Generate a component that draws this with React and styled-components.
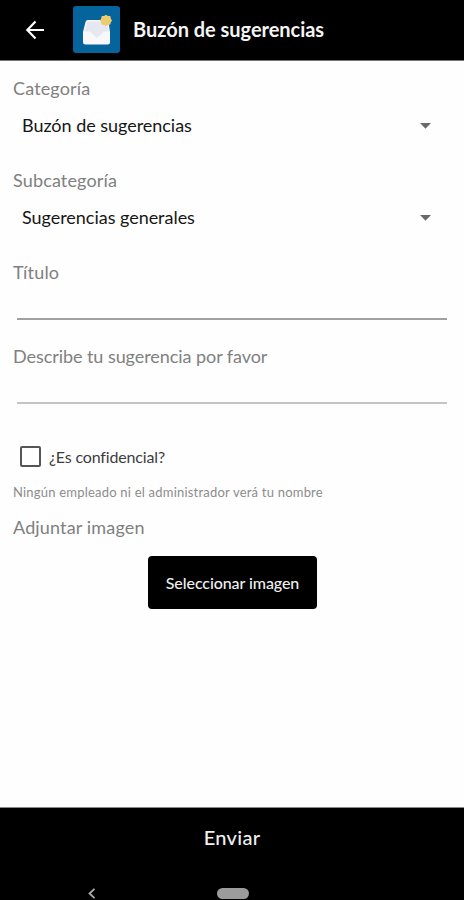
import React, { useState } from "react";
import styled, { createGlobalStyle } from "styled-components";

const GlobalStyle = createGlobalStyle`
  * {
    box-sizing: border-box;
  }

  body {
    margin: 0;
    background: #fefefe;
    font-family: Lato, "Liberation Sans", sans-serif;
  }
`;

const Screen = styled.div`
  display: flex;
  flex-direction: column;
  height: 900px;
  overflow: hidden;
`;

const Header = styled.header`
  display: flex;
  align-items: center;
  height: 61px;
  padding-left: 25px;
  background: #000;
  border-bottom: 1px solid #777;
`;

const BackButton = styled.button`
  display: flex;
  width: 20px;
  padding: 0;
  border: 0;
  background: none;
`;

const Logo = styled.div`
  width: 47px;
  height: 47px;
  margin: 0 13px 2px 28px;
  border-radius: 3px;
  background: #04649b;
  overflow: hidden;
`;

const Title = styled.h1`
  margin: 0 0 2px;
  color: #f4f4f4;
  font-size: 20px;
  line-height: 24px;
  font-weight: 700;
  letter-spacing: -0.03px;
`;

const Form = styled.main`
  display: flex;
  flex-direction: column;
  flex: 1;
  padding: 15px 17px 0 13px;
`;

const Label = styled.label`
  height: 24px;
  color: #808080;
  font-size: 18px;
  line-height: 24px;
  letter-spacing: ${(props) => props.$spacing || "0.15px"};
`;

const Select = styled.div`
  display: flex;
  justify-content: space-between;
  align-items: center;
  height: 24px;
  margin: 13px 0 31px;
  padding: 0 16px 0 9px;
  color: #161616;
  font-size: 18px;
  line-height: 24px;
  letter-spacing: -0.03px;

  svg {
    margin-top: 2px;
  }
`;

const Input = styled.input`
  height: 36px;
  margin: 0 0 24px 4px;
  padding: 0;
  border: 0;
  border-bottom: 2px solid ${(props) => props.$line};
  background: none;
  outline: none;
`;

const CheckRow = styled.label`
  display: flex;
  align-items: center;
  height: 22px;
  margin: 17px 0 0 7px;
  color: #3c3c3c;
  font-size: 16px;
  letter-spacing: -0.15px;
`;

const Checkbox = styled.input`
  appearance: none;
  width: 21px;
  height: 21px;
  margin: 0 8px 0 0;
  border: 2px solid #555;
  border-radius: 2px;
`;

const Hint = styled.p`
  height: 18px;
  margin: 16px 0 14px;
  color: #8c8c8c;
  font-size: 13px;
  line-height: 18px;
  letter-spacing: 0.21px;
`;

const ImageButton = styled.button`
  width: 169px;
  height: 53px;
  margin: 17px 0 0 135px;
  padding: 0;
  border: 0;
  border-radius: 4px;
  background: #000;
  color: #efefef;
  font-family: inherit;
  font-size: 16px;
  font-weight: 500;
  white-space: nowrap;
  letter-spacing: -0.08px;
`;

const Footer = styled.footer`
  display: flex;
  flex-direction: column;
  height: 93px;
  background: #000;
  border-top: 1px solid #888;
`;

const SendButton = styled.button`
  height: 58px;
  padding: 0;
  border: 0;
  background: none;
  color: #f0f0f0;
  font-family: inherit;
  font-size: 20px;
  font-weight: 500;
  letter-spacing: 0.3px;
`;

const NavBar = styled.div`
  display: flex;
  align-items: center;
  height: 11px;
  margin-top: 22px;
  padding-left: 87px;
`;

const HomePill = styled.div`
  width: 32px;
  height: 11px;
  margin-left: 121px;
  border-radius: 6px;
  background: #9c9c9c;
`;

const BackArrow = () => (
  <svg width="20" height="20" viewBox="0 0 20 20" fill="none" stroke="#fff" strokeWidth="2.2">
    <path d="M10.5 1.5 2.3 10l8.2 8.5M2.3 10H19" />
  </svg>
);

const MailboxLogo = () => (
  <svg width="47" height="47" viewBox="0 0 47 47">
    <path
      d="M15 14h18q2 0 2.500 2L37 26v10q0 2.500-2.500 2.500h-22Q10 38.500 10 36V26l2.500-10q.5-2 2.500-2z"
      fill="#f8f8fc"
    />
    <path d="M15 15.500h17q1.500 0 2 2l2 8H32q-2 0-3 2l-5.200 4.500-5-4.500q-1-2-3-2h-4l2-8q.4-2 1.200-2z" fill="#e6e8ef" />
    <path d="m33 8.800 2 1.100 2.300.2.500 2.300 1.200 2-1.200 2-.5 2.200-2.300.3-2 1.100-2-1.100-2.300-.3-.5-2.200-1.200-2 1.200-2 .5-2.300 2.300-.2z" fill="#edca70" />
  </svg>
);

const Caret = () => (
  <svg width="11" height="6" viewBox="0 0 11 6">
    <path d="M0 0h11L5.500 5.800z" fill="#696969" />
  </svg>
);

const NavBack = () => (
  <svg width="9" height="11" viewBox="0 0 9 11" fill="none" stroke="#aaa" strokeWidth="1.800">
    <path d="M7.500.8 2.500 5.500l5 4.700" />
  </svg>
);

const App = () => {
  const [confidential, setConfidential] = useState(false);

  return (
    <Screen>
      <GlobalStyle />
      <Header>
        <BackButton aria-label="Volver">
          <BackArrow />
        </BackButton>
        <Logo>
          <MailboxLogo />
        </Logo>
        <Title>Buzón de sugerencias</Title>
      </Header>
      <Form>
        <Label>Categoría</Label>
        <Select>
          Buzón de sugerencias <Caret />
        </Select>
        <Label>Subcategoría</Label>
        <Select>
          Sugerencias generales <Caret />
        </Select>
        <Label htmlFor="title">Título</Label>
        <Input id="title" $line="#a0a0a0" />
        <Label htmlFor="description" $spacing="-0.06px">
          Describe tu sugerencia por favor
        </Label>
        <Input id="description" $line="#c4c4c4" />
        <CheckRow>
          <Checkbox
            type="checkbox"
            checked={confidential}
            onChange={(e) => setConfidential(e.target.checked)}
          />
          ¿Es confidencial?
        </CheckRow>
        <Hint>Ningún empleado ni el administrador verá tu nombre</Hint>
        <Label>Adjuntar imagen</Label>
        <ImageButton>Seleccionar imagen</ImageButton>
      </Form>
      <Footer>
        <SendButton>Enviar</SendButton>
        <NavBar>
          <NavBack />
          <HomePill />
        </NavBar>
      </Footer>
    </Screen>
  );
};

export default App;
